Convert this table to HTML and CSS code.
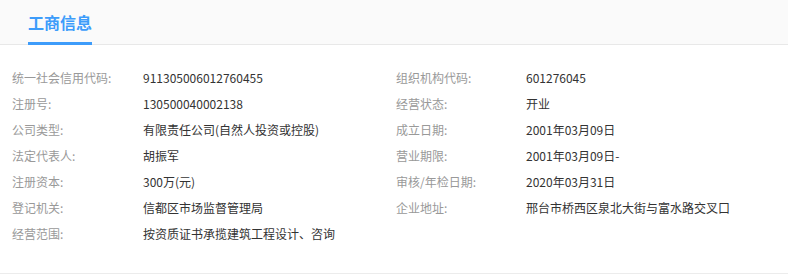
FILE: index.html
```html
<!DOCTYPE html>
<html lang="zh">
<head>
<meta charset="utf-8">
<link rel="stylesheet" href="styles.css">
</head>
<body>
<div class="panel">
  <div class="tabs">
    <div class="tab active">工商信息</div>
  </div>
  <div class="info">
    <div class="label">统一社会信用代码:</div><div class="value">911305006012760455</div>
    <div class="label">组织机构代码:</div><div class="value">601276045</div>
    <div class="label">注册号:</div><div class="value">130500040002138</div>
    <div class="label">经营状态:</div><div class="value">开业</div>
    <div class="label">公司类型:</div><div class="value">有限责任公司(自然人投资或控股)</div>
    <div class="label">成立日期:</div><div class="value">2001年03月09日</div>
    <div class="label">法定代表人:</div><div class="value">胡振军</div>
    <div class="label">营业期限:</div><div class="value">2001年03月09日-</div>
    <div class="label">注册资本:</div><div class="value">300万(元)</div>
    <div class="label">审核/年检日期:</div><div class="value">2020年03月31日</div>
    <div class="label">登记机关:</div><div class="value">信都区市场监督管理局</div>
    <div class="label">企业地址:</div><div class="value">邢台市桥西区泉北大街与富水路交叉口</div>
    <div class="label">经营范围:</div><div class="value">按资质证书承揽建筑工程设计、咨询</div>
  </div>
</div>
</body>
</html>
```
FILE: styles.css
```css
html, body {
  margin: 0;
  padding: 0;
  background: #fff;
}
body {
  font-family: "Noto Sans CJK SC", "Noto Sans", sans-serif;
  font-size: 12px;
}
.panel {
  width: 788px;
  border-bottom: 1px solid #ececec;
}
.tabs {
  height: 44px;
  background: #fafafa;
  border-bottom: 1px solid #e8e8e8;
  padding-left: 28px;
  display: flex;
  align-items: flex-end;
}
.tab {
  font-size: 16px;
  font-weight: bold;
  color: #3d9cfa;
  line-height: 22px;
  padding-bottom: 9px;
  border-bottom: 3px solid #3d9cfa;
  margin-bottom: -1px;
}
.info {
  display: grid;
  grid-template-columns: 131px 253px 130px 1fr;
  grid-auto-rows: 26px;
  padding: 20px 0 26px 12px;
  line-height: 26px;
}
.label {
  color: #999;
}
.value {
  color: #333;
}
```
